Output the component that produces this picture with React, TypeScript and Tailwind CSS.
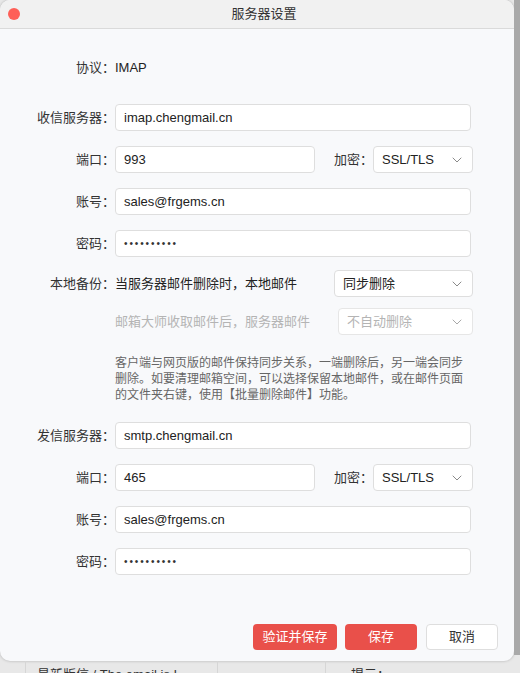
import React from "react";

const font = "font-['Liberation_Sans','Noto_Sans_CJK_SC',sans-serif]";

const Chevron = ({ light }: { light?: boolean }) => (
  <svg width="10" height="6" viewBox="0 0 10 6" fill="none" className="shrink-0">
    <path d="M1 1l4 4 4-4" stroke={light ? "#a8a8a8" : "#8a8a8a"} strokeWidth="1" strokeLinecap="round" strokeLinejoin="round" />
  </svg>
);

const Label = ({ children }: { children: React.ReactNode }) => (
  <div className="w-[115px] shrink-0 text-right text-[13px] text-[#333]">{children}</div>
);

const Input = ({ value, className = "" }: { value: React.ReactNode; className?: string }) => (
  <div className={`h-[27px] flex items-center pl-2 bg-white border border-[#dedede] rounded-[4px] text-[13px] text-[#222] ${className}`}>
    {value}
  </div>
);

const Select = ({ value, disabled, className = "" }: { value: string; disabled?: boolean; className?: string }) => (
  <div
    className={`h-[27px] flex items-center justify-between pl-2 pr-[10px] bg-white border rounded-[4px] text-[13px] ${
      disabled ? "border-[#e6e6e6] text-[#b4b4b4]" : "border-[#dedede] text-[#222]"
    } ${className}`}
  >
    <span>{value}</span>
    <Chevron light={disabled} />
  </div>
);

const Dots = () => <span className="text-[10px] tracking-[1.9px] text-[#333]">••••••••••</span>;

const ServerBlock = ({ host, port, incoming }: { host: string; port: string; incoming?: boolean }) => (
  <>
    <div className="flex items-center">
      <Label>{incoming ? "收信服务器：" : "发信服务器："}</Label>
      <Input value={host} className="w-[356px]" />
    </div>
    <div className="flex items-center mt-[15px]">
      <Label>端口：</Label>
      <Input value={port} className="w-[200px]" />
      <div className="w-[58px] text-right text-[13px] text-[#333]">加密：</div>
      <Select value="SSL/TLS" className="w-[100px]" />
    </div>
    <div className="flex items-center mt-[15px]">
      <Label>账号：</Label>
      <Input value="sales@frgems.cn" className="w-[356px]" />
    </div>
    <div className="flex items-center mt-[15px]">
      <Label>密码：</Label>
      <Input value={<Dots />} className="w-[356px]" />
    </div>
  </>
);

export default function App() {
  return (
    <div className={`w-[520px] h-[673px] overflow-hidden bg-[#e8e8e8] ${font}`}>
      <div className="flex">
        <div className="w-[514px] h-[661px] shrink-0 rounded-[10px] bg-[#f8f9fb] overflow-hidden flex flex-col shadow-[0_0_3px_rgba(0,0,0,0.25)]">
          {/* title bar */}
          <div className="h-[29px] shrink-0 flex items-center bg-[#f1f1f1] border-b border-[#dadada]">
            <div className="ml-[8px] w-[12px] h-[12px] rounded-full bg-[#fe5f57]" />
            <div className="flex-1 text-center text-[13px] text-[#333] ml-[14px]">服务器设置</div>
            <div className="w-[20px]" />
          </div>

          <div className="flex flex-col">
            <div className="flex items-center h-[27px] mt-[25px]">
              <Label>协议：</Label>
              <span className="text-[13px] text-[#222]">IMAP</span>
            </div>

            <div className="mt-[23px]">
              <ServerBlock host="imap.chengmail.cn" port="993" incoming />
            </div>

            <div className="flex items-center mt-[13px]">
              <Label>本地备份：</Label>
              <div className="w-[219px] text-[13px] text-[#222]">当服务器邮件删除时，本地邮件</div>
              <Select value="同步删除" className="w-[139px]" />
            </div>
            <div className="flex items-center mt-[11px]">
              <div className="w-[115px] shrink-0" />
              <div className="w-[223px] text-[13px] text-[#b4b4b4]">邮箱大师收取邮件后，服务器邮件</div>
              <Select value="不自动删除" disabled className="w-[135px]" />
            </div>

            <div className="flex mt-[20px]">
              <div className="w-[115px] shrink-0" />
              <p className="w-[358px] text-[12px] leading-[16px] text-[#666]">
                客户端与网页版的邮件保持同步关系，一端删除后，另一端会同步删除。如要清理邮箱空间，可以选择保留本地邮件，或在邮件页面的文件夹右键，使用【批量删除邮件】功能。
              </p>
            </div>

            <div className="mt-[19px]">
              <ServerBlock host="smtp.chengmail.cn" port="465" />
            </div>

            <div className="flex justify-end gap-2 mt-[49px] pr-[16px]">
              <button className="w-[84px] h-[26px] rounded-[4px] bg-[#e9504a] text-white text-[13px]">验证并保存</button>
              <button className="w-[72px] h-[26px] rounded-[4px] bg-[#e9504a] text-white text-[13px]">保存</button>
              <button className="w-[72px] h-[26px] rounded-[4px] bg-white border border-[#dedede] text-[#333] text-[13px] ml-[1px]">
                取消
              </button>
            </div>
          </div>
        </div>
        <div className="w-[6px] h-[655px] bg-[#a9a9a9]" />
      </div>

      {/* app behind the dialog */}
      <div className="flex h-[20px] text-[13px] text-[#333]">
        <div className="w-[26px] border-r border-[#d6d6d6]" />
        <div className="w-[192px] pl-[11px] pt-[4px] border-r border-[#d6d6d6] whitespace-nowrap overflow-hidden">最新版信 / The email is I...</div>
        <div className="w-[108px] border-r border-[#d6d6d6]" />
        <div className="pl-[25px] pt-[4px]">提示：</div>
      </div>
    </div>
  );
}
